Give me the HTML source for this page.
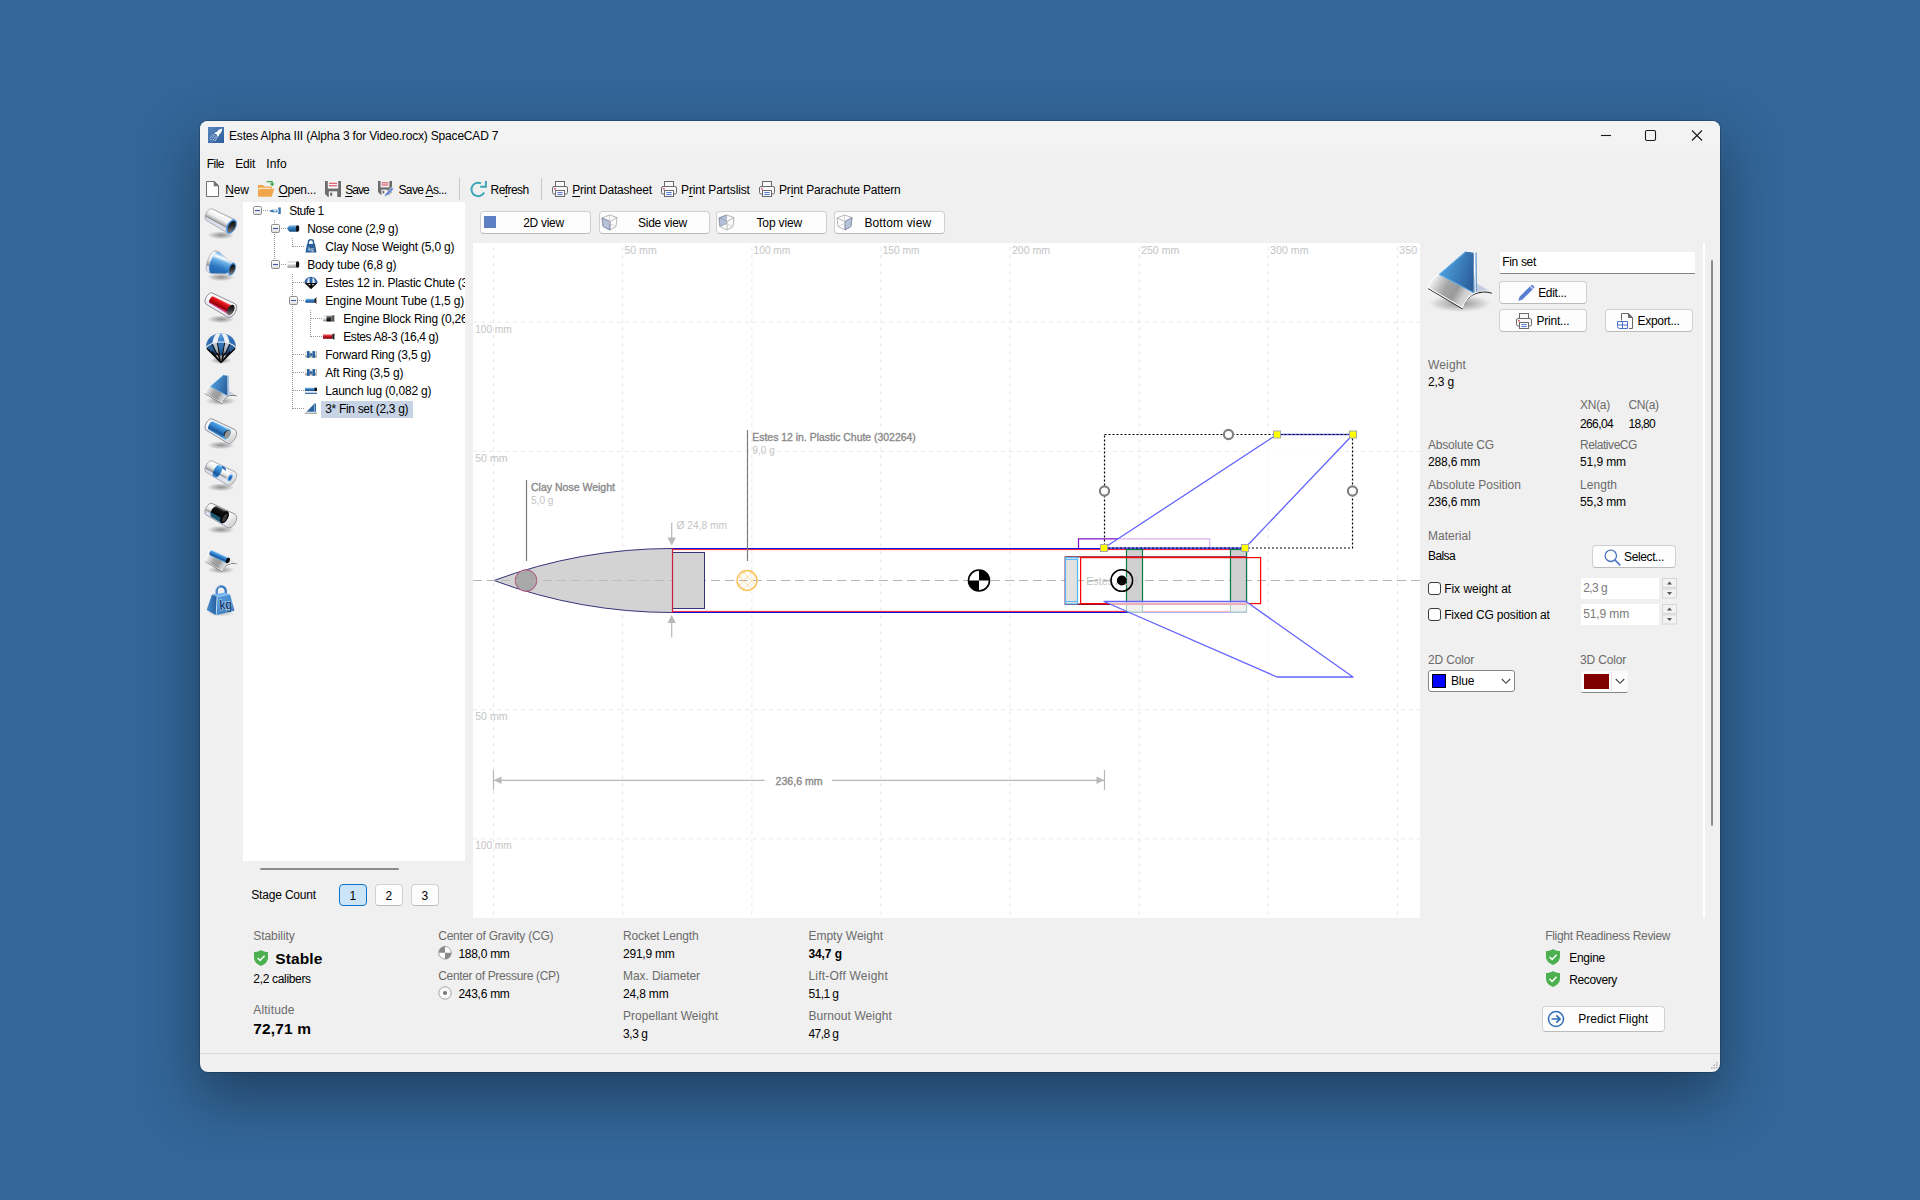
<!DOCTYPE html>
<html lang="en"><head><meta charset="utf-8"><title>Estes Alpha III (Alpha 3 for Video.rocx) SpaceCAD 7</title>
<style>
html,body{margin:0;padding:0;}
body{width:1920px;height:1200px;overflow:hidden;position:relative;background:#336699;font-family:"Liberation Sans",sans-serif;font-size:12px;color:#000;}
.t{position:absolute;white-space:pre;line-height:1;}
.t u{text-decoration:underline;text-underline-offset:1.5px;text-decoration-thickness:1px;}
.a{position:absolute;}
#win{position:absolute;left:200px;top:121px;width:1520px;height:951px;background:#f0f0f0;border-radius:8px;box-shadow:0 24px 56px 4px rgba(0,0,0,0.34),0 0 0 1px rgba(0,0,0,0.18);overflow:hidden;}
#titlebar{position:absolute;left:0;top:0;width:1520px;height:30px;background:#f3f3f3;}
#tree{position:absolute;left:243px;top:202px;width:222px;height:659px;background:#fff;overflow:hidden;}
#canvasbg{position:absolute;left:473px;top:243px;width:947px;height:675px;background:#fff;}
.btn{position:absolute;box-sizing:border-box;background:#fdfdfd;border:1px solid #d0d0d0;border-bottom-color:#bcbcbc;border-radius:4px;}
svg{position:absolute;overflow:visible;}

</style></head>
<body>
<div id="win"><div id="titlebar"></div>
<div class="a" style="left:0;top:932px;width:1520px;height:1px;background:#d9d9d9"></div>
</div>
<div id="canvasbg"></div>

<svg width="0" height="0"><defs>
<radialGradient id="fshd"><stop offset="0" stop-color="#000" stop-opacity="0.380"/><stop offset="0.600" stop-color="#000" stop-opacity="0.160"/><stop offset="1" stop-color="#000" stop-opacity="0"/></radialGradient>
<linearGradient id="fpl" gradientUnits="userSpaceOnUse" x1="8" y1="34" x2="46" y2="56"><stop offset="0" stop-color="#f2f2f2"/><stop offset="0.350" stop-color="#a6a6a6"/><stop offset="0.600" stop-color="#9a9a9a"/><stop offset="0.800" stop-color="#cfcfcf"/><stop offset="1" stop-color="#e4e4e4"/></linearGradient>
<linearGradient id="ffb" gradientUnits="userSpaceOnUse" x1="18" y1="20" x2="50" y2="30"><stop offset="0" stop-color="#4e9edc"/><stop offset="0.500" stop-color="#3d80bc"/><stop offset="1" stop-color="#2b5f9c"/></linearGradient>
<g id="finicon">
<ellipse cx="36" cy="57.500" rx="31" ry="8.500" fill="url(#fshd)"/>
<path d="M52,37L67.800,46.200C63,44.600 58,44.600 52.800,46.300Z" fill="#c4cde0"/>
<path d="M4.200,42.900L38.400,63.300C41,55.500 45,50.500 52,48C58,46 63,46 67.800,47.700L67.800,46.200C63,44.500 58,44.500 52,46.500C45,49 41,54 38.400,61.800L4.200,41.400Z" fill="#151515"/>
<path d="M15,28.200C10,31 6,36 4.200,41.400L38.400,61.800C41,54 45,49 52,46.500L49.800,46.800Z" fill="url(#fpl)"/>
<path d="M15,28.200C10,31 6,36 4.200,41.400L38.400,61.800C41,54 45,49 52,46.500C58,44.500 63,44.500 67.800,46.200" fill="none" stroke="#fff" stroke-width="1.100"/>
<path d="M15,28.200L41.400,5.400L49.800,6.600L49.800,46.800Z" fill="url(#ffb)"/>
<path d="M15.600,28.600L41.600,6.200M15,28.200L49.800,46.800" fill="none" stroke="#58aeea" stroke-width="1"/>
<path d="M41.400,5.400L44.400,4.800L52.500,6.300L49.800,6.600Z" fill="#f4f8fc"/>
<path d="M49.800,6.600L52.500,6.300L52.800,45.600L51,46.500L49.800,46.800Z" fill="#fafcfe"/>
<path d="M51.500,6.800L52.500,6.300L52.800,45.600L51.900,46.050Z" fill="#3a7cc0"/>
<path d="M49.800,6.600C49,18 50.500,24 50.500,46.500L49.800,46.800Z" fill="#2b5f9c"/>
</g></defs></svg>

<!-- title icon -->
<svg style="left:208px;top:127px" width="16" height="16" viewBox="0 0 16 16"><defs><linearGradient id="tig" x1="0" y1="0" x2="1" y2="1"><stop offset="0" stop-color="#5a86bd"/><stop offset="1" stop-color="#2d5f9c"/></linearGradient></defs><rect width="16" height="16" fill="url(#tig)"/><path d="M14.2,1.6c-2.2,.3-4,1.500-5.300,3.400l-1.400,.2l-1.200,1.700l1.700,.1l1.200,1.200l.1,1.700l1.700-1.200l.2-1.400c1.900-1.300,3.100-3.100,3-5.700z" fill="#fff"/><path d="M6.800,8.300l-5,5.300M5.600,7.400l-4.200,3.600M7.900,9.500l-3.800,4.800M9,10.300l-2.300,4.300" stroke="#fff" stroke-width="0.9" stroke-dasharray="1.6 1" opacity="0.9"/></svg>
<!-- window controls -->
<svg style="left:1590px;top:121px" width="130" height="30" viewBox="0 0 130 30"><g stroke="#1a1a1a" stroke-width="1.1" fill="none"><path d="M11,14.500h10"/><rect x="55.500" y="9.500" width="10" height="10" rx="1.500"/><path d="M102,9.500l10,10M112,9.500l-10,10"/></g></svg>
<!-- New -->
<svg style="left:206px;top:181px" width="14" height="16" viewBox="0 0 14 16"><path d="M.5,.5H8.200L12.500,4.800V15.500H.5Z" fill="#fff" stroke="#6e6e6e"/><path d="M8.200,.5V4.800H12.500Z" fill="#6e6e6e" stroke="#6e6e6e" stroke-linejoin="round"/></svg>
<!-- Open -->
<svg style="left:258px;top:180px" width="17" height="17" viewBox="0 0 17 17"><path d="M0,5h4.800l1.600,1.600h7.400v2.500H0z" fill="#eea245"/><path d="M.8,7.800h12.200v4H.8z" fill="#f7f7f7"/><path d="M0,16.800V9.500l1,0l1.500,-.8H16.300L13.700,16.800Z" fill="#f0a64c"/><path d="M8.600,1.700h5.600v3.200" fill="none" stroke="#3aa84a" stroke-width="1.300"/><path d="M11.700,3.600l2.500,2.600l2.500,-2.600z" fill="#3aa84a"/></svg>
<!-- Save -->
<svg style="left:325px;top:181px" width="16" height="16" viewBox="0 0 16 16"><path d="M0,0H16V16H3L0,13Z" fill="#6c6c6c"/><rect x="2.800" y="0" width="10.400" height="7.600" fill="#f4f4f4"/><path d="M4,2.300h8M4,4.700h8" stroke="#d83a4a" stroke-width="1.100"/><rect x="3.800" y="10.300" width="8.400" height="5.700" fill="#f4f4f4"/><rect x="5.200" y="11.600" width="2" height="3.200" fill="#6c6c6c"/></svg>
<!-- Save As -->
<svg style="left:378px;top:181px" width="17" height="17" viewBox="0 0 17 17"><path d="M0,0H14V11L11,14H3L0,11Z" fill="#6c6c6c"/><rect x="2.600" y="0" width="8.800" height="6.400" fill="#f4f4f4"/><path d="M3.600,1.900h6.800M3.600,4h6.800" stroke="#d83a4a" stroke-width="1"/><rect x="3.400" y="8.600" width="6" height="5.400" fill="#f4f4f4"/><rect x="4.500" y="9.800" width="1.800" height="2.600" fill="#6c6c6c"/><path d="M6.200,15.800l1,-2.800l6.700,-6.700l1.800,1.800l-6.700,6.700z" fill="#5a84d6" stroke="#f0f0f0" stroke-width="0.800"/></svg>
<div class="a" style="left:459px;top:178px;width:1px;height:22px;background:#c9c9c9"></div>
<!-- Refresh -->
<svg style="left:470px;top:180px" width="18" height="18" viewBox="0 0 18 18"><path d="M14.100,12.500A6.700,6.700 0 1 1 11,3.400" fill="none" stroke="#3aa6b8" stroke-width="1.900"/><path d="M10.200,6.700h5.700V1" fill="none" stroke="#3aa6b8" stroke-width="1.900"/></svg>
<div class="a" style="left:541px;top:178px;width:1px;height:22px;background:#c9c9c9"></div>
<!-- printers -->
<svg width="0" height="0"><defs><g id="prn"><rect x="3.500" y=".5" width="9" height="5.500" fill="#f8f8f8" stroke="#6a6a6a"/><rect x=".5" y="5.500" width="15" height="7.500" rx="1.500" fill="#f8f8f8" stroke="#6a6a6a"/><rect x="3.500" y="9.500" width="9" height="6" fill="#fff" stroke="#6a6a6a"/><path d="M5.300,11.600h5.400M5.300,13.600h5.400" stroke="#4d6fd0" stroke-width="1"/><rect x="2" y="7.200" width="1.800" height="1.200" fill="#e03040"/></g></defs></svg>
<svg style="left:552px;top:181px" width="16" height="16" viewBox="0 0 16 16"><use href="#prn"/></svg>
<svg style="left:661px;top:181px" width="16" height="16" viewBox="0 0 16 16"><use href="#prn"/></svg>
<svg style="left:759px;top:181px" width="16" height="16" viewBox="0 0 16 16"><use href="#prn"/></svg>
<!-- view buttons -->
<div class="btn" style="left:480px;top:211px;width:111px;height:23px"></div>
<div class="btn" style="left:599px;top:211px;width:111px;height:23px"></div>
<div class="btn" style="left:716px;top:211px;width:111px;height:23px"></div>
<div class="btn" style="left:834px;top:211px;width:111px;height:23px"></div>
<div class="a" style="left:484px;top:216px;width:12px;height:12px;background:#5f7fc4"></div>
<svg width="0" height="0"><defs><g id="cube" fill="none" stroke="#9a9a9a" stroke-width="0.700"><path d="M1,4L8.500,1L16,3.500L9,7.500Z"/><path d="M1,4L2,12.500L9,16L9,7.500M9,16L15,12.500L16,3.500"/><path d="M8.500,1L8.500,9.500L2,12.500M8.500,9.500L15,12.500" stroke="#c4c4c4"/></g></defs></svg>
<svg style="left:601px;top:213.500px" width="17" height="17" viewBox="0 0 17 17"><path d="M1,4L9,7.500L9,16L2,12.500Z" fill="#b4c2de" stroke="#6f86bc" stroke-width="0.800"/><use href="#cube"/></svg>
<svg style="left:718px;top:213.500px" width="17" height="17" viewBox="0 0 17 17"><path d="M1,4L8.500,1L8.500,9.500L2,12.500Z" fill="#b4c2de" stroke="#6f86bc" stroke-width="0.800"/><use href="#cube"/></svg>
<svg style="left:836px;top:213.500px" width="17" height="17" viewBox="0 0 17 17"><path d="M9,7.500L16,3.500L15,12.500L9,16Z" fill="#b4c2de" stroke="#6f86bc" stroke-width="0.800"/><use href="#cube"/></svg>

<svg style="left:200px;top:202px" width="44" height="430" viewBox="200 202 44 430" font-family="Liberation Sans, sans-serif">
<defs>
<radialGradient id="shd"><stop offset="0" stop-color="#000" stop-opacity="0.400"/><stop offset="0.550" stop-color="#000" stop-opacity="0.190"/><stop offset="1" stop-color="#000" stop-opacity="0"/></radialGradient>
<linearGradient id="lgw" x1="0" y1="0" x2="0" y2="1"><stop offset="0" stop-color="#c9cbd0"/><stop offset="0.120" stop-color="#ffffff"/><stop offset="0.450" stop-color="#ececec"/><stop offset="0.640" stop-color="#b2b2b2"/><stop offset="0.700" stop-color="#8c8c8c"/><stop offset="0.760" stop-color="#d4d6e4"/><stop offset="1" stop-color="#e8ecf8"/></linearGradient>
<linearGradient id="lgclear" x1="0" y1="0" x2="0" y2="1"><stop offset="0" stop-color="#f4f4f6"/><stop offset="0.500" stop-color="#fbfbfd"/><stop offset="0.850" stop-color="#e4e8f6"/><stop offset="1" stop-color="#f0f0f4"/></linearGradient>
<linearGradient id="lgb" x1="0" y1="0" x2="0" y2="1"><stop offset="0" stop-color="#b8dcf8"/><stop offset="0.180" stop-color="#4aa0e4"/><stop offset="0.550" stop-color="#2a74c0"/><stop offset="0.720" stop-color="#1a5496"/><stop offset="1" stop-color="#4a9ee0"/></linearGradient>
<linearGradient id="lgb2" x1="0" y1="0" x2="0" y2="1"><stop offset="0" stop-color="#5aa8e4"/><stop offset="0.200" stop-color="#ffffff"/><stop offset="0.340" stop-color="#6eb2e8"/><stop offset="0.650" stop-color="#2a74c0"/><stop offset="1" stop-color="#2466ae"/></linearGradient>
<linearGradient id="lgr" x1="0" y1="0" x2="0" y2="1"><stop offset="0" stop-color="#ffc8b8"/><stop offset="0.200" stop-color="#ee1820"/><stop offset="0.550" stop-color="#b40408"/><stop offset="0.720" stop-color="#8c0004"/><stop offset="0.850" stop-color="#d83078"/><stop offset="1" stop-color="#e878a8"/></linearGradient>
<linearGradient id="lgk" x1="0" y1="0" x2="0" y2="1"><stop offset="0" stop-color="#6a6a6a"/><stop offset="0.200" stop-color="#151515"/><stop offset="0.620" stop-color="#000"/><stop offset="0.680" stop-color="#1c506e"/><stop offset="1" stop-color="#24607e"/></linearGradient>
<linearGradient id="hole" x1="0" y1="0" x2="0.300" y2="1"><stop offset="0" stop-color="#050505"/><stop offset="0.550" stop-color="#2c2c2c"/><stop offset="1" stop-color="#7a7070"/></linearGradient>
<linearGradient id="inwh" x1="0" y1="0" x2="1" y2="1"><stop offset="0" stop-color="#fdfdfd"/><stop offset="1" stop-color="#c8c8c8"/></linearGradient>
<linearGradient id="kgf" x1="0" y1="0" x2="1" y2="1"><stop offset="0" stop-color="#5aa4e4"/><stop offset="1" stop-color="#3272b8"/></linearGradient>
<linearGradient id="kgl" x1="0" y1="0" x2="1" y2="0"><stop offset="0" stop-color="#4a90d4"/><stop offset="1" stop-color="#245c9c"/></linearGradient>
<linearGradient id="chin" x1="0" y1="0" x2="0" y2="1"><stop offset="0" stop-color="#fff" stop-opacity="0"/><stop offset="0.450" stop-color="#000" stop-opacity="0.150"/><stop offset="1" stop-color="#000" stop-opacity="0.950"/></linearGradient>
<linearGradient id="domeg" x1="0" y1="0" x2="0" y2="1"><stop offset="0" stop-color="#fff" stop-opacity="0.350"/><stop offset="0.500" stop-color="#fff" stop-opacity="0"/><stop offset="1" stop-color="#000" stop-opacity="0.180"/></linearGradient>
</defs>
<ellipse cx="221" cy="235.2" rx="13.5" ry="4" fill="url(#shd)"/>
<g transform="translate(220.3,220.5) rotate(28)">
<path d="M-12.6,-6.4L12.6,-7.6A4.2,7.6 0 0 1 12.6,7.6L-12.6,6.4A3.3,6.4 0 0 1 -12.6,-6.4Z" fill="url(#lgw)" stroke="#9a9aa2" stroke-width="0.7"/>
<ellipse cx="12.6" cy="0" rx="4.400" ry="7.6" fill="#3c90e4"/><ellipse cx="12.9" cy="0.100" rx="3.300" ry="6.199999999999999" fill="url(#hole)"/>
</g>
<ellipse cx="221" cy="277.2" rx="13.5" ry="4" fill="url(#shd)"/>
<g transform="translate(221.9,265.3) rotate(20.7)">
<path d="M-10.600,-11.500A4.500,11.500 0 0 0 -10.600,11.500L-7,11.300L5.800,6.600H10.600A3.400,6.500 0 0 0 10.600,-6.500H5.800L-7,-11.300Z" fill="url(#lgw)" stroke="#a4a4aa" stroke-width="0.600"/>
<path d="M-7.600,-11.300L5.800,-6.500A3,6.500 0 0 1 5.800,6.500L-7.600,11.300A4.400,11.300 0 0 1 -7.600,-11.300Z" fill="url(#lgb2)"/>
<path d="M-7.600,-11.300A4.400,11.300 0 0 0 -7.600,11.300" fill="none" stroke="#9cc8f0" stroke-width="0.500" stroke-dasharray="1 0.600"/>
<path d="M6.300,-6.500H10.600A3.400,6.500 0 0 1 10.600,6.500H6.300A3,6.500 0 0 0 6.300,-6.500Z" fill="url(#lgw)"/>
<ellipse cx="10.600" cy="0" rx="3.500" ry="6.500" fill="#3c90e4"/><ellipse cx="10.900" cy="0.100" rx="2.600" ry="5.100" fill="url(#hole)"/>
</g>
<ellipse cx="221" cy="319.2" rx="13.5" ry="4" fill="url(#shd)"/>
<g transform="translate(220.3,304.5) rotate(28)">
<path d="M-12.6,-6.4L12.6,-7.6A4.2,7.6 0 0 1 12.6,7.6L-12.6,6.4A3.3,6.4 0 0 1 -12.6,-6.4Z" fill="url(#lgclear)" stroke="#8a8a92" stroke-width="0.85"/>
<path d="M-9.8,-3.9L11.1,-5.1A2.8,5.1 0 0 1 11.1,5.1L-9.8,3.9A2,3.9 0 0 1 -9.8,-3.9Z" fill="url(#lgr)"/>
<ellipse cx="11.799999999999999" cy="0" rx="3.300" ry="5.700" fill="url(#hole)"/>
<path d="M12.6,-7.6A4.400,7.6 0 0 1 12.6,7.6" fill="none" stroke="#9c9ca4" stroke-width="0.700"/>
</g>
<ellipse cx="221" cy="360.5" rx="11" ry="3.4" fill="url(#shd)"/>
<g transform="translate(203,330)">
<defs><clipPath id="domec"><path d="M3,17.400C3,-1.500 33,-1.500 33,17.400C26,10.200 10,10.200 3,17.400Z"/></clipPath><clipPath id="innc"><path d="M3,17.400C10,10.200 26,10.200 33,17.400C30,23.500 24,25.500 18,25.500C12,25.500 6,23.500 3,17.400Z"/></clipPath></defs>
<g clip-path="url(#domec)"><rect x="0" y="0" width="36" height="20" fill="#2c6cb4"/><path d="M9,20C9,8 12,4.500 15,3L18,3C15.500,7 14.100,12 14.100,20Z M27,20C27,8 24,4.500 21,3L18,3C20.500,7 22.200,12 22.200,20Z" fill="#eef1f5"/><path d="M14.100,20C14.100,12 15.500,6 18,3C20.500,6 22.200,12 22.200,20Z" fill="#3f88d0"/><rect x="0" y="0" width="36" height="20" fill="url(#domeg)"/></g>
<g clip-path="url(#innc)"><path d="M3,17.400L18,32.700L33,17.400V10H3Z" fill="#2a62a4"/><path d="M8.500,10L18,32.700L13.800,10Z M27.500,10L18,32.700L22.200,10Z" fill="#c6c9ce"/><path d="M13.800,10L18,32.700L22.200,10Z" fill="#2f74bc"/><path d="M3,17.400L18,32.700M8.300,13L18,32.700M14,11L18,32.700M22,11L18,32.700M27.700,13L18,32.700M33,17.400L18,32.700" stroke="#0a0a0a" stroke-width="1" fill="none"/><rect x="0" y="10" width="36" height="23" fill="url(#chin)"/></g>
<path d="M4,18.600L18,32.700M9,21.500L18,32.700M14.500,23L18,32.700M21.500,23L18,32.700M27,21.500L18,32.700M32,18.600L18,32.700" stroke="#0a0a0a" stroke-width="1.300" fill="none"/>
<path d="M15.500,25.500L18,32.700L20.500,25.500Z" fill="#111"/>
<path d="M17.300,25.500L18,31.500L18.700,25.500Z" fill="#fff"/>
<path d="M3,17.400C10,10.200 26,10.200 33,17.400" fill="none" stroke="#f4f7fb" stroke-width="1.100"/>
</g>
<g transform="translate(202.700,372.300) scale(0.500)"><use href="#finicon"/></g>
<ellipse cx="221" cy="445.2" rx="13.5" ry="4" fill="url(#shd)"/>
<g transform="translate(220.3,430.5) rotate(28)">
<path d="M-12.6,-6.4L12.6,-7.6A4.2,7.6 0 0 1 12.6,7.6L-12.6,6.4A3.3,6.4 0 0 1 -12.6,-6.4Z" fill="url(#lgclear)" stroke="#8a8a92" stroke-width="0.85"/>
<ellipse cx="12.299999999999999" cy="0" rx="3.900" ry="6.8" fill="url(#inwh)"/>
<path d="M-10.399999999999999,-4.7L7.6,-5.7A3,5.7 0 0 1 7.6,5.7L-10.399999999999999,4.7A2.3,4.7 0 0 1 -10.399999999999999,-4.7Z" fill="url(#lgb)"/>
<ellipse cx="7.800" cy="0" rx="3.100" ry="5.700" fill="#58b4f0"/><ellipse cx="8.100" cy="0" rx="2.400" ry="4.400" fill="#9a9694"/><path d="M8.100,-4.400A2.400,4.400 0 0 0 8.100,4.400A3.600,4.400 0 0 1 8.100,-4.400Z" fill="#222"/>
</g>
<ellipse cx="221" cy="487.2" rx="13.5" ry="4" fill="url(#shd)"/>
<g transform="translate(220.3,472.5) rotate(28)">
<path d="M-12.6,-6.4L12.6,-7.6A4.2,7.6 0 0 1 12.6,7.6L-12.6,6.4A3.3,6.4 0 0 1 -12.6,-6.4Z" fill="url(#lgw)" stroke="#9a9aa2" stroke-width="0.7"/>
<ellipse cx="12.4" cy="0" rx="4" ry="7.0" fill="url(#inwh)"/>
<path d="M-1,-4.6L10.799999999999999,-5.4A3,5.4 0 0 1 10.799999999999999,5.4L-1,4.6A2.4,4.6 0 0 1 -1,-4.6Z" fill="url(#lgw)"/>
<ellipse cx="11.0" cy="0" rx="3" ry="5.400" fill="#e6e6ea"/><ellipse cx="11.2" cy="0.200" rx="2" ry="3.600" fill="#4c9ae4"/><ellipse cx="11.4" cy="0.400" rx="1.300" ry="2.400" fill="#2468b8"/>
<path d="M-4.400,-6.700L-1.800,-6.800A2.400,6.800 0 0 1 -1.800,6.900L-4.400,6.700A2.400,6.700 0 0 1 -4.400,-6.700Z" fill="url(#lgb)"/>
<path d="M-1.800,-6.800C1.500,-7.400 3.800,-6 4.200,-4.300L1.400,-4.500A2.400,3 0 0 0 -0.600,-4.500Z" fill="#2468b8"/>
</g>
<ellipse cx="221" cy="529.7" rx="13.5" ry="4" fill="url(#shd)"/>
<g transform="translate(220.3,515) rotate(28)">
<path d="M-12.6,-6.4L12.6,-7.6A4.2,7.6 0 0 1 12.6,7.6L-12.6,6.4A3.3,6.4 0 0 1 -12.6,-6.4Z" fill="url(#lgclear)" stroke="#8a8a92" stroke-width="0.85"/>
<ellipse cx="12.299999999999999" cy="0" rx="3.900" ry="6.8" fill="url(#inwh)"/>
<path d="M-12.1,-5.6L-6.8,-6A3.2,6 0 0 1 -6.8,6L-12.1,5.6A3,5.6 0 0 1 -12.1,-5.6Z" fill="url(#lgw)"/>
<path d="M-6.8,-5.9L4.5,-6.6A3.6,6.6 0 0 1 4.5,6.6L-6.8,5.9A3.2,5.9 0 0 1 -6.8,-5.9Z" fill="url(#lgk)"/>
<ellipse cx="4.600" cy="0" rx="3.600" ry="6.600" fill="#0c0c0c"/><ellipse cx="5.600" cy="0.500" rx="2.300" ry="4.600" fill="#3a3a3a"/><ellipse cx="5.200" cy="0.300" rx="2.300" ry="4.800" fill="none" stroke="#000" stroke-width="0.700"/>
</g>
<g transform="translate(203,540.400) scale(0.500)">
<ellipse cx="36" cy="59" rx="27" ry="7.500" fill="url(#fshd)"/>
<path d="M4.200,42.900L38.400,63.300C41,55.500 45,50.500 52,48C58,46 63,46 67.800,47.700L67.800,46.200C63,44.500 58,44.500 52,46.500C45,49 41,54 38.400,61.800L4.200,41.400Z" fill="#151515"/>
<path d="M18,19.800C11,24 6.500,33 4.200,41.400L38.400,61.800C41,54 45,49 52,46.500C58,44.500 63,44.500 67.800,46.200L52.200,36Z" fill="url(#fpl)"/>
<path d="M52.200,36L18,19.800C11,24 6.500,33 4.200,41.400L38.400,61.800C41,54 45,49 52,46.500C58,44.500 63,44.500 67.800,46.200" fill="none" stroke="#fff" stroke-width="1.200"/>
<path d="M52.200,36L18,19.800" fill="none" stroke="#909090" stroke-width="0.600"/>
</g>
<g transform="translate(219.35,556.65) rotate(24.4)">
<path d="M-9,-2.800H9A1.600,2.800 0 0 1 9,2.800H-9A1.600,2.800 0 0 1 -9,-2.800Z" fill="url(#lgb)"/><ellipse cx="9.300" cy="0" rx="1.900" ry="2.900" fill="#0a0a0a"/>
</g>
<g transform="translate(203,582)">
<ellipse cx="18" cy="31.500" rx="14" ry="3" fill="url(#shd)" opacity="0.500"/>
<path d="M13.600,13.500V9.500A4.600,4.800 0 0 1 22.800,9V11.500" fill="none" stroke="#3578c0" stroke-width="2.300"/>
<path d="M12.700,13V9.500A5.400,5.600 0 0 1 17,4.200" fill="none" stroke="#c0d8f0" stroke-width="0.600"/>
<path d="M9,12.600L22.200,10.500L27,12.300L14.100,14.700Z" fill="#72b6ec"/>
<path d="M9,12.600L14.100,14.700L13.200,33.300L3.600,27.900Z" fill="url(#kgl)"/>
<path d="M14.100,14.700L27,12.300L31.500,28.800L13.200,33.300Z" fill="url(#kgf)"/>
<path d="M14.100,14.700L13.200,33.300" stroke="#dcecfa" stroke-width="0.800"/><path d="M14.100,14.700L27,12.300" stroke="#a8d4f6" stroke-width="0.600"/>
<text x="16.300" y="27.600" font-size="14" font-weight="700" fill="#173f78" stroke="#d4e8fa" stroke-width="0.900" paint-order="stroke" textLength="12.600" lengthAdjust="spacingAndGlyphs" transform="rotate(-5 22 22)">kg</text>
</g>
</svg>
<div id="tree">
<div class="a" style="left:78px;top:199px;width:92px;height:17px;background:#c6d4e6"></div>
<svg style="left:0;top:0" width="222" height="659" viewBox="243 202 222 659">
<defs><linearGradient id="bxg" x1="0" y1="0" x2="0" y2="1"><stop offset="0" stop-color="#fff"/><stop offset="0.500" stop-color="#f4f4f4"/><stop offset="1" stop-color="#dcdcdc"/></linearGradient>
<linearGradient id="gblue" x1="0" y1="0" x2="0" y2="1"><stop offset="0" stop-color="#9cc4e8"/><stop offset="0.350" stop-color="#3c86c6"/><stop offset="1" stop-color="#174e86"/></linearGradient>
<linearGradient id="gwhite" x1="0" y1="0" x2="0" y2="1"><stop offset="0" stop-color="#d0d0d0"/><stop offset="0.350" stop-color="#ffffff"/><stop offset="1" stop-color="#8a8a8a"/></linearGradient>
<linearGradient id="gred" x1="0" y1="0" x2="0" y2="1"><stop offset="0" stop-color="#f0a0a0"/><stop offset="0.400" stop-color="#d01828"/><stop offset="1" stop-color="#7a0814"/></linearGradient>
<linearGradient id="gdark" x1="0" y1="0" x2="0" y2="1"><stop offset="0" stop-color="#bbb"/><stop offset="0.400" stop-color="#333"/><stop offset="1" stop-color="#000"/></linearGradient>
</defs>
<path d="M263,210.5H268M281,228.5H286M293,246.5H304M281,264.5H286M293,282.5H304M299,300.5H304M311,318.5H322M311,336.5H322M293,354.5H304M293,372.5H304M293,390.5H304M293,408.5H304M274.5,220V224M274.5,234V260M292.5,238V247M292.5,274V296M292.5,306V409M310.5,310V337" stroke="#9a9a9a" stroke-width="1" stroke-dasharray="1 1" fill="none"/>
<rect x="253.5" y="206.5" width="8" height="8" rx="1.200" fill="url(#bxg)" stroke="#8e8e8e"/><path d="M255,210.5h5" stroke="#3f55a4" stroke-width="1.100"/>
<rect x="271.5" y="224.5" width="8" height="8" rx="1.200" fill="url(#bxg)" stroke="#8e8e8e"/><path d="M273,228.5h5" stroke="#3f55a4" stroke-width="1.100"/>
<rect x="271.5" y="260.5" width="8" height="8" rx="1.200" fill="url(#bxg)" stroke="#8e8e8e"/><path d="M273,264.5h5" stroke="#3f55a4" stroke-width="1.100"/>
<rect x="289.5" y="296.5" width="8" height="8" rx="1.200" fill="url(#bxg)" stroke="#8e8e8e"/><path d="M291,300.5h5" stroke="#3f55a4" stroke-width="1.100"/>
<g transform="translate(269,210.5)"><path d="M0,0.500l3,-1.200h5.500v2.400h-5.500z" fill="#3c78b4"/><rect x="4.500" y="-0.800" width="3" height="1.800" fill="#d8e4f0"/><path d="M9,-3h2.800v6.400h-2.800l.6,-2.400v-1.600z" fill="#3c78b4"/></g>
<g transform="translate(287,228.5)"><path d="M2.500,-3.200L0,0L2.500,3.200H10.500V-3.200Z" fill="url(#gblue)"/><ellipse cx="10.600" cy="0" rx="1.700" ry="3.300" fill="#111"/><path d="M11.200,-3.200a1.700,3.300 0 0 1 0,6.400a2.400,3.300 0 0 0 0,-6.400z" fill="#e8e8e8"/></g>
<g transform="translate(305,246.5)"><path d="M3.500,-2.500v-2a2.500,2.200 0 0 1 5,0v2" fill="none" stroke="#2a5f98" stroke-width="1.600"/><path d="M2,-2.800h8l1.500,8.800h-11z" fill="#2a5f98"/><path d="M4,-4.500h3.500v2h-3.500z" fill="#e8eef6"/><text x="3" y="4.500" font-size="5" font-weight="700" fill="#bcd0e8" font-family="Liberation Sans, sans-serif">kg</text></g>
<g transform="translate(287,264.5)"><path d="M0.500,-3.200V3.200H10.500V-3.200Z" fill="url(#gwhite)"/><ellipse cx="10.600" cy="0" rx="1.700" ry="3.300" fill="#111"/><path d="M11.200,-3.200a1.700,3.300 0 0 1 0,6.400a2.400,3.300 0 0 0 0,-6.400z" fill="#e8e8e8"/></g>
<g transform="translate(305,282.5)"><path d="M-0.500,0.500a6.500,6.300 0 0 1 13,0z" fill="#2f66a6"/><path d="M2.200,0.500a4,6 0 0 1 2.300,-5.800v5.800z M7.500,0.500v-5.800a4,6 0 0 1 2.300,5.800z" fill="#e6eef8"/><path d="M-0.500,0.500h13l-6.500,6.200z" fill="#0a0a0a"/><rect x="3.500" y="1.700" width="1.800" height="1" fill="#eee"/><rect x="7" y="1.700" width="1.800" height="1" fill="#eee"/></g>
<g transform="translate(305,300.5)"><path d="M0,1.500L1,-1.800H10V2.300H1Z" fill="url(#gblue)"/><path d="M9.500,-1.800l2.500,-1.400v6.400l-2.500,-1.200z" fill="#222"/><path d="M11.300,-2.600l.7,-.6v6.400l-.7,-.5z" fill="#ddd"/></g>
<g transform="translate(323,318.5)"><rect x="0" y="-2.800" width="4" height="5.600" fill="url(#gwhite)"/><rect x="3.500" y="-3" width="5" height="6" fill="url(#gdark)"/><path d="M8.500,-3h1.500l2,-.6v7.200l-2,-.6h-1.500z" fill="#555"/><path d="M11.200,-3.200l.8,-.4v7.200l-.8,-.4z" fill="#ddd"/></g>
<g transform="translate(323,336.5)"><path d="M0,-2.300H9.500V2.300H0Z" fill="url(#gred)"/><path d="M9.300,-2.300l2.700,-1v6.600l-2.700,-1z" fill="#222"/><path d="M11.300,-3l.7,-.3v6.600l-.7,-.3z" fill="#ddd"/></g>
<g transform="translate(305,354.5)"><rect x="0" y="-2.800" width="12" height="5.600" fill="url(#gwhite)"/><rect x="2" y="-3.400" width="2.600" height="6.800" fill="#2a62a0"/><rect x="7.500" y="-3.400" width="2.600" height="6.800" fill="#2a62a0"/><rect x="4.600" y="-1.200" width="2.900" height="2.400" fill="#2a62a0"/><path d="M11,-3.200l1,-.4v7.200l-1,-.4z" fill="#bbb"/></g>
<g transform="translate(305,372.5)"><rect x="0" y="-2.800" width="12" height="5.600" fill="url(#gwhite)"/><rect x="2" y="-3.400" width="2.600" height="6.800" fill="#2a62a0"/><rect x="7.500" y="-3.400" width="2.600" height="6.800" fill="#2a62a0"/><rect x="4.600" y="-1.200" width="2.900" height="2.400" fill="#2a62a0"/><path d="M11,-3.200l1,-.4v7.200l-1,-.4z" fill="#bbb"/></g>
<g transform="translate(305,390.5)"><rect x="0" y="-2.800" width="10" height="3.400" fill="url(#gblue)"/><path d="M9.500,-2.800h2.500v3.400h-2.500z" fill="#111"/><path d="M0,2.800h12" stroke="#2a62a0" stroke-width="1.200"/></g>
<g transform="translate(305,408.5)"><path d="M1.500,3.200L9.500,-5H11V3.200Z" fill="#2a62a0"/><path d="M9,-3.800l1,-1.200v8.200h-1z" fill="#8cb4e0"/><path d="M0,4.700h12" stroke="#888" stroke-width="1"/></g>
</svg>
<span class="t" style="left:46.2px;top:3px;font-size:12px;letter-spacing:-0.490px;">Stufe 1</span>
<span class="t" style="left:64.2px;top:21px;font-size:12px;letter-spacing:-0.252px;">Nose cone (2,9 g)</span>
<span class="t" style="left:82.2px;top:39px;font-size:12px;letter-spacing:-0.193px;">Clay Nose Weight (5,0 g)</span>
<span class="t" style="left:64.2px;top:57px;font-size:12px;letter-spacing:-0.174px;">Body tube (6,8 g)</span>
<span class="t" style="left:82.2px;top:75px;font-size:12px;letter-spacing:-0.279px;">Estes 12 in. Plastic Chute (302264) (9,0 g)</span>
<span class="t" style="left:82.2px;top:93px;font-size:12px;letter-spacing:-0.124px;">Engine Mount Tube (1,5 g)</span>
<span class="t" style="left:100.2px;top:111px;font-size:12px;letter-spacing:-0.192px;">Engine Block Ring (0,26 g)</span>
<span class="t" style="left:100.2px;top:129px;font-size:12px;letter-spacing:-0.402px;">Estes A8-3 (16,4 g)</span>
<span class="t" style="left:82.2px;top:147px;font-size:12px;letter-spacing:-0.227px;">Forward Ring (3,5 g)</span>
<span class="t" style="left:82.2px;top:165px;font-size:12px;letter-spacing:-0.163px;">Aft Ring (3,5 g)</span>
<span class="t" style="left:82.2px;top:183px;font-size:12px;letter-spacing:-0.200px;">Launch lug (0,082 g)</span>
<span class="t" style="left:82.2px;top:201px;font-size:12px;letter-spacing:-0.312px;">3* Fin set (2,3 g)</span>
</div>
<svg id="cv" style="left:473px;top:243px;overflow:hidden" width="947" height="675" viewBox="473 243 947 675" font-family="Liberation Sans, sans-serif">
<g stroke="#e8e8e8" stroke-width="1" stroke-dasharray="4 4" fill="none">
<path d="M493.5,247V918"/>
<path d="M622.6,247V918"/>
<path d="M751.8,247V918"/>
<path d="M880.9,247V918"/>
<path d="M1010.1,247V918"/>
<path d="M1139.2,247V918"/>
<path d="M1268.3,247V918"/>
<path d="M1397.5,247V918"/>
<path d="M473,322.2H1420"/>
<path d="M473,451.4H1420"/>
<path d="M473,709.6H1420"/>
<path d="M473,838.8H1420"/>
</g>
<path d="M473,580.5H1420" stroke="#b4b4b4" stroke-width="1" stroke-dasharray="9 5" fill="none"/>
<g fill="#c4c4c4" font-size="11.5">
<text x="624.4" y="254" textLength="32.4" lengthAdjust="spacingAndGlyphs">50 mm</text>
<text x="753.6" y="254" textLength="36.7" lengthAdjust="spacingAndGlyphs">100 mm</text>
<text x="882.7" y="254" textLength="36.7" lengthAdjust="spacingAndGlyphs">150 mm</text>
<text x="1011.9" y="254" textLength="38.3" lengthAdjust="spacingAndGlyphs">200 mm</text>
<text x="1141.0" y="254" textLength="38.3" lengthAdjust="spacingAndGlyphs">250 mm</text>
<text x="1270.1" y="254" textLength="38.5" lengthAdjust="spacingAndGlyphs">300 mm</text>
<text x="1399.3" y="254" textLength="38.5" lengthAdjust="spacingAndGlyphs">350 mm</text>
<text x="475.2" y="332.8" textLength="36.5" lengthAdjust="spacingAndGlyphs">100 mm</text>
<text x="475.2" y="462.0" textLength="32.4" lengthAdjust="spacingAndGlyphs">50 mm</text>
<text x="475.2" y="720.2" textLength="32.4" lengthAdjust="spacingAndGlyphs">50 mm</text>
<text x="475.2" y="849.4" textLength="36.5" lengthAdjust="spacingAndGlyphs">100 mm</text>
</g>
<path d="M494,580.5 A511,511 0 0 1 672.5,548.5 V612.5 A511,511 0 0 1 494,580.5Z" fill="#d3d3d3" stroke="#34347a" stroke-width="1"/>
<rect x="672.5" y="552.5" width="32" height="56" fill="#d3d3d3" stroke="#34347a" stroke-width="1"/>
<circle cx="526" cy="580.5" r="10.8" fill="#a8a8a8" stroke="#b05078" stroke-width="1"/>
<path d="M494,580.5H672" stroke="#b4b4b4" stroke-width="1" stroke-dasharray="9 5" stroke-dashoffset="7" fill="none" opacity="0.7"/>
<path d="M673,548.5H1246.5V612.5H673" fill="none" stroke="#1010e0" stroke-width="1.2"/>
<path d="M673,549.6H1246V611.4H673" fill="none" stroke="#f01830" stroke-width="1"/>
<path d="M672.5,548V613" stroke="#c81e3c" stroke-width="1.2"/>
<defs><pattern id="hatch" width="5.6" height="5.6" patternUnits="userSpaceOnUse" patternTransform="rotate(45 747 580)"><path d="M0,0H5.6M0,0V5.6" stroke="#f8c25a" stroke-width="0.9"/></pattern></defs>
<circle cx="747" cy="580.5" r="10" fill="url(#hatch)" stroke="#f8c25a" stroke-width="1.4"/>
<rect x="1126.5" y="549.5" width="16" height="62.5" fill="#d0d0d0" stroke="#0a7a40" stroke-width="1.2"/>
<rect x="1230.5" y="549.5" width="16" height="62.5" fill="#d0d0d0" stroke="#0a7a40" stroke-width="1.2"/>
<path d="M1246,556.9H1065.3V604.3H1246" fill="none" stroke="#8a0a2a" stroke-width="1.4"/>
<rect x="1065.5" y="557.5" width="12" height="46.5" fill="#e2e2e2" stroke="#58b8f8" stroke-width="1.2"/>
<path d="M1065.5,559.5h12M1065.5,601.5h12" stroke="#58b8f8" stroke-width="1"/>
<rect x="1080.6" y="557.6" width="180" height="46" fill="none" stroke="#ff0000" stroke-width="1.2"/>
<text x="1086.3" y="584.8" font-size="11.5" fill="#c4c4c4" textLength="52" lengthAdjust="spacingAndGlyphs">Estes A8-3</text>
<path d="M1078.5,548.5V538.8H1209.7V548.5" fill="none" stroke="#8a10c8" stroke-width="1.2"/>
<path d="M1104,601.5L1277,677H1353L1246,601.5Z" fill="rgba(255,255,255,0.68)" stroke="#6464ff" stroke-width="1.3" stroke-linejoin="round"/>
<path d="M1104,548L1277,434.5H1353L1245,548Z" fill="rgba(255,255,255,0.68)" stroke="#6464ff" stroke-width="1.3" stroke-linejoin="round"/>
<g><circle cx="979" cy="580.5" r="10.5" fill="#fff" stroke="#000" stroke-width="1.6"/>
<path d="M979,580.5V570A10.5,10.5 0 0 1 989.5,580.5Z M979,580.5V591A10.5,10.5 0 0 1 968.5,580.5Z" fill="#000"/></g>
<circle cx="1121.8" cy="580.5" r="10.8" fill="none" stroke="#000" stroke-width="1.5"/><circle cx="1121.8" cy="580.5" r="4.9" fill="#000"/>
<rect x="1104.5" y="434.5" width="248" height="113.5" fill="none" stroke="#000" stroke-width="1.2" stroke-dasharray="2 2"/>
<circle cx="1228.5" cy="434.5" r="4.6" fill="#fff" stroke="#808080" stroke-width="2.1"/>
<circle cx="1104.5" cy="491" r="4.6" fill="#fff" stroke="#808080" stroke-width="2.1"/>
<circle cx="1352.5" cy="491" r="4.6" fill="#fff" stroke="#808080" stroke-width="2.1"/>
<rect x="1100.5" y="544.5" width="7" height="7" fill="#ffff00" stroke="#a8a8a8" stroke-width="1"/>
<rect x="1241.5" y="544.5" width="7" height="7" fill="#ffff00" stroke="#a8a8a8" stroke-width="1"/>
<rect x="1273.5" y="431.0" width="7" height="7" fill="#ffff00" stroke="#a8a8a8" stroke-width="1"/>
<rect x="1349.5" y="431.0" width="7" height="7" fill="#ffff00" stroke="#a8a8a8" stroke-width="1"/>
<g stroke="#7a7a7a" stroke-width="1.2"><path d="M526.5,480V561"/><path d="M747.5,430V561"/></g>
<g font-size="10.5" fill="#8a8a8a" stroke="#8a8a8a" stroke-width="0.35"><text x="531" y="491" textLength="84" lengthAdjust="spacingAndGlyphs">Clay Nose Weight</text>
<text x="752.3" y="441" textLength="163.5" lengthAdjust="spacingAndGlyphs">Estes 12 in. Plastic Chute (302264)</text></g>
<g font-size="10.5" fill="#c4c4c4"><text x="531" y="504" textLength="22.5" lengthAdjust="spacingAndGlyphs">5,0 g</text><text x="752.3" y="454" textLength="22.5" lengthAdjust="spacingAndGlyphs">9,0 g</text>
<text x="676.6" y="529" font-size="11" textLength="50.5" lengthAdjust="spacingAndGlyphs">Ø 24,8 mm</text></g>
<g stroke="#b8b8b8" fill="#b8b8b8" stroke-width="1.2"><path d="M671.7,523V538M671.7,623V637.5"/><path d="M667.5,537.5h8.4l-4.2,8z M667.5,623h8.4l-4.2,-8z" stroke="none"/>
<path d="M493.5,770V790M1104.5,770V790M494,780.3H764.5M832,780.3H1104"/><path d="M494,780.3l7.5,-3.8v7.6z M1104,780.3l-7.5,-3.8v7.6z" stroke="none"/></g>
<text x="775.6" y="784.8" font-size="10.5" fill="#8a8a8a" stroke="#8a8a8a" stroke-width="0.35" textLength="47" lengthAdjust="spacingAndGlyphs">236,6 mm</text>
</svg>
<!-- right panel -->
<div class="a" style="left:1703px;top:243px;width:2px;height:675px;background:#fff"></div>
<div class="a" style="left:1711px;top:260px;width:2px;height:566px;background:#8b8b8b;border-radius:1px"></div>
<svg style="left:1424px;top:246px" width="72" height="72" viewBox="0 0 72 72"><use href="#finicon"/></svg>
<div class="a" style="left:1499.500px;top:252px;width:195px;height:21px;background:#fff;border-bottom:1px solid #848484;border-radius:2px 2px 0 0"></div>
<div class="btn" style="left:1499px;top:281px;width:88px;height:23px"></div>
<div class="btn" style="left:1499px;top:309px;width:88px;height:23px"></div>
<div class="btn" style="left:1605px;top:309px;width:88px;height:23px"></div>
<div class="btn" style="left:1592px;top:545px;width:84px;height:23px"></div>
<!-- pencil -->
<svg style="left:1518px;top:285px" width="17" height="17" viewBox="0 0 17 17"><path d="M0.300,16l1.300,-4.300L12.300,1l2.900,2.900L4.500,14.600z" fill="#5b7fd0"/><path d="M13.200,0.200a1,1 0 0 1 1.500,0l1.400,1.400a1,1 0 0 1 0,1.500l-.5,.5l-2.900,-2.900z" fill="#5b7fd0"/><path d="M11.900,1.500l2.900,2.900" stroke="#fdfdfd" stroke-width="0.700"/></svg>
<svg style="left:1516px;top:313px" width="16" height="16" viewBox="0 0 16 16"><use href="#prn"/></svg>
<!-- export -->
<svg style="left:1617px;top:313px" width="17" height="17" viewBox="0 0 17 17"><path d="M4.500,7.500V.5H11.500L15.500,4.500V15.500H12" fill="none" stroke="#6a6a6a"/><path d="M11.500,.5V4.500H15.500Z" fill="#6a6a6a" stroke="#6a6a6a" stroke-linejoin="round"/><path d="M.5,8.500H10.500V15.500H2.500a2,2 0 0 1 -2,-2ZM.5,12H10.500M5.500,8.500V15.500" fill="none" stroke="#4d6fd0" stroke-width="1"/></svg>
<!-- magnifier -->
<svg style="left:1604px;top:549px" width="17" height="17" viewBox="0 0 17 17"><circle cx="6.800" cy="6.800" r="5.700" fill="none" stroke="#4d74c4" stroke-width="1.300"/><path d="M11,11l4.800,4.800" stroke="#4d74c4" stroke-width="1.700" stroke-linecap="round"/></svg>
<!-- checkboxes -->
<div class="a" style="left:1428px;top:582px;width:11px;height:11px;border:1px solid #3c3c3c;border-radius:3px;background:#fff"></div>
<div class="a" style="left:1428px;top:608px;width:11px;height:11px;border:1px solid #3c3c3c;border-radius:3px;background:#fff"></div>
<div class="a" style="left:1581px;top:578px;width:78px;height:21px;background:#fff"></div>
<div class="a" style="left:1581px;top:604px;width:78px;height:21px;background:#fff"></div>
<svg style="left:1662px;top:578px" width="16" height="48" viewBox="0 0 16 48"><g fill="#f2f2f2" stroke="#d6d6d6"><rect x=".5" y=".5" width="14" height="9"/><rect x=".5" y="11" width="14" height="9"/><rect x=".5" y="26.500" width="14" height="9"/><rect x=".5" y="37" width="14" height="9"/></g><path d="M5,6.500h5l-2.500,-3zM5,14h5l-2.500,3zM5,32.500h5l-2.500,-3zM5,40h5l-2.500,3z" fill="#555"/></svg>
<!-- combo -->
<div class="a" style="left:1428px;top:670px;width:85px;height:20px;border:1px solid #868686;border-radius:3px;background:#fff"></div>
<div class="a" style="left:1432px;top:674px;width:12px;height:12px;border:1px solid #000;background:#0000ff"></div>
<svg style="left:1501px;top:678px" width="10" height="7" viewBox="0 0 10 7"><path d="M.8,1l4.200,4.300L9.200,1" fill="none" stroke="#444" stroke-width="1.100"/></svg>
<div class="a" style="left:1581px;top:671px;width:47px;height:21px;background:#fbfbfb;border-bottom:1px solid #868686;border-radius:2px"></div>
<div class="a" style="left:1611px;top:672px;width:1px;height:19px;background:#e4e4e4"></div>
<div class="a" style="left:1584px;top:674px;width:25px;height:15px;background:#800000"></div>
<svg style="left:1615px;top:678px" width="10" height="7" viewBox="0 0 10 7"><path d="M.8,1l4.200,4.300L9.200,1" fill="none" stroke="#444" stroke-width="1.100"/></svg>

<!-- bottom -->
<div class="a" style="left:260px;top:868px;width:139px;height:2px;background:#8b8b8b;border-radius:1px"></div>
<div class="btn" style="left:339px;top:884px;width:28px;height:22px;background:#cce4f7;border-color:#0a72c8"></div>
<div class="btn" style="left:375px;top:884px;width:28px;height:22px"></div>
<div class="btn" style="left:411px;top:884px;width:28px;height:22px"></div>
<svg width="0" height="0"><defs><g id="shield"><path d="M7,0C9,1.400 11.500,2 14,2V7.500C14,11.500 11,14.500 7,16C3,14.500 0,11.500 0,7.500V2C2.500,2 5,1.400 7,0Z" fill="#4caf50"/><path d="M3.600,8l2.500,2.500l4.500,-4.700" fill="none" stroke="#fff" stroke-width="1.500"/></g></defs></svg>
<svg style="left:254px;top:950px" width="14" height="16" viewBox="0 0 14 16"><use href="#shield"/></svg>
<svg style="left:1546px;top:949px" width="14" height="16" viewBox="0 0 14 16"><use href="#shield"/></svg>
<svg style="left:1546px;top:971px" width="14" height="16" viewBox="0 0 14 16"><use href="#shield"/></svg>
<svg style="left:438px;top:946px" width="14" height="14" viewBox="0 0 14 14"><circle cx="7" cy="6.800" r="6.300" fill="#fff" stroke="#8a8a8a" stroke-width="0.800"/><path d="M7,6.800V.5A6.300,6.300 0 0 0 .7,6.800Z M7,6.800V13.100A6.300,6.300 0 0 0 13.300,6.800Z" fill="#8a8a8a"/></svg>
<svg style="left:438px;top:986px" width="14" height="14" viewBox="0 0 14 14"><circle cx="7" cy="7" r="6.200" fill="#fafafa" stroke="#9a9a9a" stroke-width="0.900"/><circle cx="7" cy="7" r="2" fill="#777"/></svg>
<div class="btn" style="left:1542px;top:1006px;width:123px;height:26px"></div>
<svg style="left:1547px;top:1010px" width="18" height="18" viewBox="0 0 18 18"><circle cx="9" cy="9" r="7.500" fill="none" stroke="#2f6db5" stroke-width="1.500"/><path d="M4.500,9h8M9.300,5.300L13,9L9.300,12.700" fill="none" stroke="#2f6db5" stroke-width="1.700"/></svg>
<svg style="left:1708px;top:1060px" width="12" height="12" viewBox="0 0 12 12"><g fill="#b0b0b0"><rect x="8" y="2" width="1.500" height="1.500"/><rect x="5.500" y="4.500" width="1.500" height="1.500"/><rect x="8" y="4.500" width="1.500" height="1.500"/><rect x="3" y="7" width="1.500" height="1.500"/><rect x="5.500" y="7" width="1.500" height="1.500"/><rect x="8" y="7" width="1.500" height="1.500"/></g></svg>

<span class="t" style="left:229.0px;top:130px;font-size:12px;letter-spacing:-0.182px;">Estes Alpha III (Alpha 3 for Video.rocx) SpaceCAD 7</span>
<span class="t" style="left:206.8px;top:158px;font-size:12px;letter-spacing:-0.536px;">File</span>
<span class="t" style="left:235.3px;top:158px;font-size:12px;letter-spacing:-0.247px;">Edit</span>
<span class="t" style="left:266.3px;top:158px;font-size:12px;letter-spacing:0.096px;">Info</span>
<span class="t" style="left:225.3px;top:184px;font-size:12px;letter-spacing:-0.172px;"><u>N</u>ew</span>
<span class="t" style="left:278.4px;top:184px;font-size:12px;letter-spacing:-0.251px;"><u>O</u>pen...</span>
<span class="t" style="left:345.3px;top:184px;font-size:12px;letter-spacing:-0.965px;"><u>S</u>ave</span>
<span class="t" style="left:398.4px;top:184px;font-size:12px;letter-spacing:-0.583px;">Save <u>A</u>s...</span>
<span class="t" style="left:490.6px;top:184px;font-size:12px;letter-spacing:-0.590px;">Re<u>f</u>resh</span>
<span class="t" style="left:572.3px;top:184px;font-size:12px;letter-spacing:-0.215px;"><u>P</u>rint Datasheet</span>
<span class="t" style="left:681.0px;top:184px;font-size:12px;letter-spacing:-0.126px;">P<u>r</u>int Partslist</span>
<span class="t" style="left:779.0px;top:184px;font-size:12px;letter-spacing:-0.136px;">Pr<u>i</u>nt Parachute Pattern</span>
<span class="t" style="left:523.2px;top:217px;font-size:12px;letter-spacing:-0.298px;">2D view</span>
<span class="t" style="left:638.0px;top:217px;font-size:12px;letter-spacing:-0.262px;">Side view</span>
<span class="t" style="left:756.5px;top:217px;font-size:12px;letter-spacing:-0.148px;">Top view</span>
<span class="t" style="left:864.4px;top:217px;font-size:12px;letter-spacing:0.140px;">Bottom view</span>
<span class="t" style="left:1502.3px;top:256px;font-size:12px;letter-spacing:-0.345px;">Fin set</span>
<span class="t" style="left:1538.2px;top:287px;font-size:12px;letter-spacing:-0.341px;">Edit...</span>
<span class="t" style="left:1536.4px;top:315px;font-size:12px;letter-spacing:-0.211px;">Print...</span>
<span class="t" style="left:1637.5px;top:315px;font-size:12px;letter-spacing:-0.299px;">Export...</span>
<span class="t" style="left:1428.0px;top:359px;font-size:12px;letter-spacing:0.143px;color:#6b6b6b;">Weight</span>
<span class="t" style="left:1428.0px;top:376px;font-size:12px;letter-spacing:-0.160px;">2,3 g</span>
<span class="t" style="left:1580.0px;top:399px;font-size:12px;letter-spacing:-0.269px;color:#6b6b6b;">XN(a)</span>
<span class="t" style="left:1628.5px;top:399px;font-size:12px;letter-spacing:-0.400px;color:#6b6b6b;">CN(a)</span>
<span class="t" style="left:1580.0px;top:418px;font-size:12px;letter-spacing:-0.617px;">266,04</span>
<span class="t" style="left:1628.5px;top:418px;font-size:12px;letter-spacing:-0.706px;">18,80</span>
<span class="t" style="left:1428.0px;top:439px;font-size:12px;letter-spacing:-0.186px;color:#6b6b6b;">Absolute CG</span>
<span class="t" style="left:1580.0px;top:439px;font-size:12px;letter-spacing:-0.436px;color:#6b6b6b;">RelativeCG</span>
<span class="t" style="left:1428.0px;top:456px;font-size:12px;letter-spacing:-0.170px;">288,6 mm</span>
<span class="t" style="left:1580.0px;top:456px;font-size:12px;letter-spacing:-0.098px;">51,9 mm</span>
<span class="t" style="left:1428.0px;top:479px;font-size:12px;letter-spacing:0.016px;color:#6b6b6b;">Absolute Position</span>
<span class="t" style="left:1580.0px;top:479px;font-size:12px;letter-spacing:0.049px;color:#6b6b6b;">Length</span>
<span class="t" style="left:1428.0px;top:496px;font-size:12px;letter-spacing:-0.170px;">236,6 mm</span>
<span class="t" style="left:1580.0px;top:496px;font-size:12px;letter-spacing:-0.098px;">55,3 mm</span>
<span class="t" style="left:1428.0px;top:530px;font-size:12px;letter-spacing:0.039px;color:#6b6b6b;">Material</span>
<span class="t" style="left:1428.0px;top:550px;font-size:12px;letter-spacing:-0.606px;">Balsa</span>
<span class="t" style="left:1624.0px;top:551px;font-size:12px;letter-spacing:-0.373px;">Select...</span>
<span class="t" style="left:1444.2px;top:583px;font-size:12px;letter-spacing:-0.035px;">Fix weight at</span>
<span class="t" style="left:1444.2px;top:609px;font-size:12px;letter-spacing:-0.156px;">Fixed CG position at</span>
<span class="t" style="left:1583.3px;top:582px;font-size:12px;letter-spacing:-0.601px;color:#7a7a7a;">2,3 g</span>
<span class="t" style="left:1583.3px;top:608px;font-size:12px;letter-spacing:-0.141px;color:#7a7a7a;">51,9 mm</span>
<span class="t" style="left:1428.0px;top:654px;font-size:12px;letter-spacing:-0.170px;color:#6b6b6b;">2D Color</span>
<span class="t" style="left:1580.0px;top:654px;font-size:12px;letter-spacing:-0.170px;color:#6b6b6b;">3D Color</span>
<span class="t" style="left:1451.0px;top:675px;font-size:12px;letter-spacing:-0.208px;">Blue</span>
<span class="t" style="left:251.3px;top:889px;font-size:12px;letter-spacing:-0.184px;">Stage Count</span>
<span class="t" style="left:349.6px;top:890px;font-size:12px;letter-spacing:-0.201px;">1</span>
<span class="t" style="left:385.6px;top:890px;font-size:12px;letter-spacing:-0.201px;">2</span>
<span class="t" style="left:421.6px;top:890px;font-size:12px;letter-spacing:-0.201px;">3</span>
<span class="t" style="left:253.3px;top:930px;font-size:12px;letter-spacing:-0.070px;color:#6b6b6b;">Stability</span>
<span class="t" style="left:275.3px;top:951px;font-size:15.5px;letter-spacing:0.114px;font-weight:700;">Stable</span>
<span class="t" style="left:253.3px;top:973px;font-size:12px;letter-spacing:-0.323px;">2,2 calibers</span>
<span class="t" style="left:253.3px;top:1004px;font-size:12px;letter-spacing:0.171px;color:#6b6b6b;">Altitude</span>
<span class="t" style="left:253.3px;top:1021px;font-size:15.5px;letter-spacing:0.144px;font-weight:700;">72,71 m</span>
<span class="t" style="left:438.2px;top:930px;font-size:12px;letter-spacing:-0.220px;color:#6b6b6b;">Center of Gravity (CG)</span>
<span class="t" style="left:458.4px;top:948px;font-size:12px;letter-spacing:-0.270px;">188,0 mm</span>
<span class="t" style="left:438.2px;top:970px;font-size:12px;letter-spacing:-0.323px;color:#6b6b6b;">Center of Pressure (CP)</span>
<span class="t" style="left:458.4px;top:988px;font-size:12px;letter-spacing:-0.270px;">243,6 mm</span>
<span class="t" style="left:623.0px;top:930px;font-size:12px;letter-spacing:-0.138px;color:#6b6b6b;">Rocket Length</span>
<span class="t" style="left:623.0px;top:948px;font-size:12px;letter-spacing:-0.232px;">291,9 mm</span>
<span class="t" style="left:623.0px;top:970px;font-size:12px;letter-spacing:-0.079px;color:#6b6b6b;">Max. Diameter</span>
<span class="t" style="left:623.0px;top:988px;font-size:12px;letter-spacing:-0.170px;">24,8 mm</span>
<span class="t" style="left:623.0px;top:1010px;font-size:12px;letter-spacing:0.029px;color:#6b6b6b;">Propellant Weight</span>
<span class="t" style="left:623.0px;top:1028px;font-size:12px;letter-spacing:-0.441px;">3,3 g</span>
<span class="t" style="left:808.4px;top:930px;font-size:12px;letter-spacing:0.010px;color:#6b6b6b;">Empty Weight</span>
<span class="t" style="left:808.4px;top:948px;font-size:12px;letter-spacing:-0.072px;font-weight:700;">34,7 g</span>
<span class="t" style="left:808.4px;top:970px;font-size:12px;letter-spacing:0.222px;color:#6b6b6b;">Lift-Off Weight</span>
<span class="t" style="left:808.4px;top:988px;font-size:12px;letter-spacing:-0.546px;">51,1 g</span>
<span class="t" style="left:808.4px;top:1010px;font-size:12px;letter-spacing:0.079px;color:#6b6b6b;">Burnout Weight</span>
<span class="t" style="left:808.4px;top:1028px;font-size:12px;letter-spacing:-0.546px;">47,8 g</span>
<span class="t" style="left:1545.2px;top:930px;font-size:12px;letter-spacing:-0.307px;color:#6b6b6b;">Flight Readiness Review</span>
<span class="t" style="left:1569.2px;top:952px;font-size:12px;letter-spacing:-0.263px;">Engine</span>
<span class="t" style="left:1569.2px;top:974px;font-size:12px;letter-spacing:-0.361px;">Recovery</span>
<span class="t" style="left:1578.3px;top:1013px;font-size:12px;letter-spacing:-0.024px;">Predict Flight</span>
</body></html>
